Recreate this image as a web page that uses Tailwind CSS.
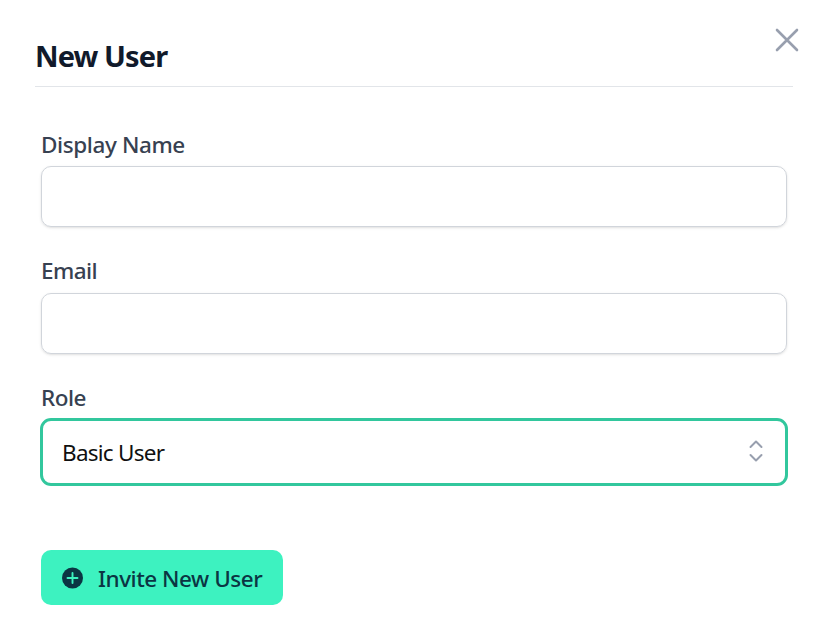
<!DOCTYPE html>
<html lang="en">
<head>
<meta charset="utf-8">
<title>New User</title>
<script src="https://cdn.jsdelivr.net/npm/@tailwindcss/browser@4"></script>
</head>
<body class="relative h-[639px] w-[829px] overflow-hidden bg-white font-['Noto_Sans','Open_Sans',sans-serif]">
<button aria-label="Close" class="absolute left-[771px] top-6 size-8 text-[#989fae]">
<svg viewBox="0 0 32 32" class="size-8" fill="none" stroke="currentColor" stroke-width="2.6" stroke-linecap="round"><path d="M6 6 26 26M26 6 6 26"/></svg>
</button>
<main class="pl-[35px] pr-9 pt-9">
<header class="flex h-[51px] items-start border-b border-[#e2e5e9]">
<h1 class="whitespace-nowrap text-[29px] leading-10 font-bold tracking-[-0.9px] text-[#111a2b]">New User</h1>
</header>
<form class="flex flex-col items-start px-1.5 pt-[42px]">
<label class="h-[37px] whitespace-nowrap text-[22.5px] leading-8 font-medium tracking-[-0.4px] text-[#374151]">Display Name</label>
<input aria-label="Display Name" class="h-[61px] w-[746px] rounded-[10px] border-[1.5px] border-[#d1d5db] shadow-sm">
<label class="mt-7 h-[38px] whitespace-nowrap text-[22.5px] leading-8 font-medium tracking-[-0.6px] text-[#374151]">Email</label>
<input aria-label="Email" class="h-[61px] w-[746px] rounded-[10px] border-[1.5px] border-[#d1d5db] shadow-sm">
<label class="mt-7 h-9 whitespace-nowrap text-[22.5px] leading-8 font-medium tracking-[-0.5px] text-[#374151]">Role</label>
<button type="button" class="-ml-px flex h-[68px] w-[748px] items-center justify-between rounded-[11px] border-3 border-[#32c79d] pl-[19px] pr-[19px] text-[22.5px] text-[#101010]">
<span class="mt-0.5 whitespace-nowrap tracking-[-0.75px]">Basic User</span>
<svg viewBox="0 0 20 24" class="mb-0.5 h-6 w-5" fill="none" stroke="#989fae" stroke-width="2" stroke-linecap="round" stroke-linejoin="round"><path d="m4.500 8 5.500-5.500L15.500 8M4.500 16l5.500 5.500 5.500-5.500"/></svg>
</button>
<button type="button" class="mt-16 flex h-[55px] w-[242px] items-center rounded-[10px] bg-[#3df2c0] pl-[21px] text-[22.5px] font-medium text-[#0b3543]">
<svg viewBox="0 0 22 22" class="mr-3.5 size-[22px] shrink-0"><circle cx="10.500" cy="11" r="10.500" fill="#0b3543"/><path d="M10.500 6v10M5.500 11h10" stroke="#3df2c0" stroke-width="1.900" stroke-linecap="round"/></svg>
<span class="mt-0.5 whitespace-nowrap tracking-[-0.47px]">Invite New User</span>
</button>
</form>
</main>
</body>
</html>
